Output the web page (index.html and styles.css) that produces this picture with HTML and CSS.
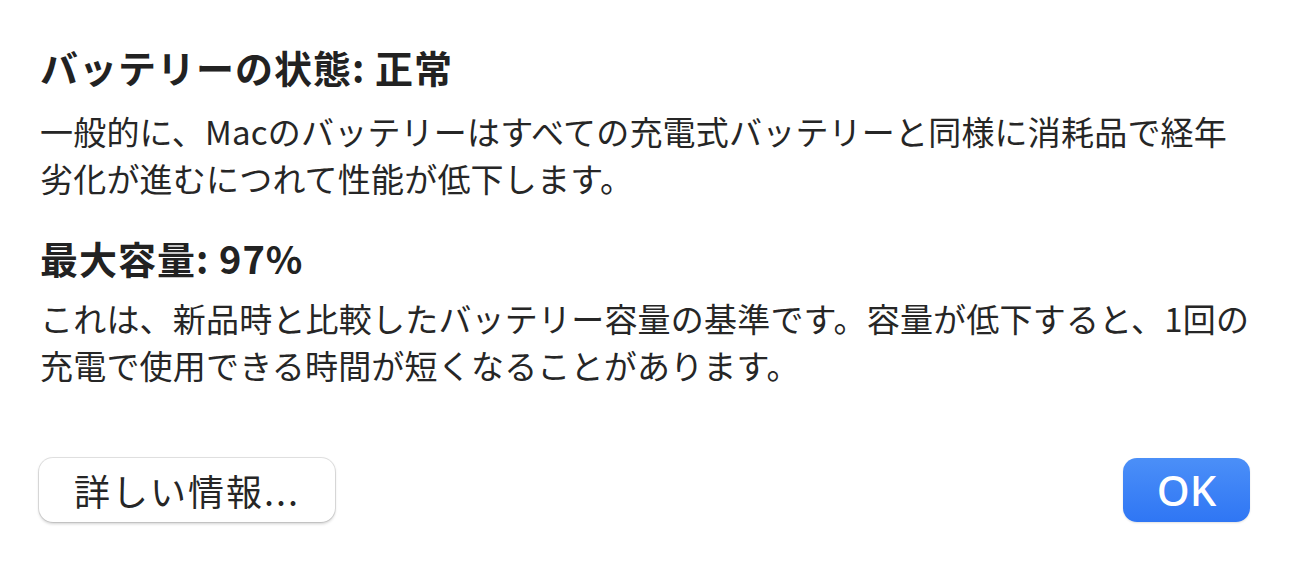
FILE: index.html
```html
<!DOCTYPE html>
<html lang="ja">
<head>
<meta charset="utf-8">
<link rel="stylesheet" href="styles.css">
</head>
<body>
<div class="dialog">
  <h1 class="title">バッテリーの状態: 正常</h1>
  <p class="text first">一般的に、Macのバッテリーはすべての充電式バッテリーと同様に消耗品で経年<br>劣化が進むにつれて性能が低下します。</p>
  <h2 class="title second">最大容量: 97%</h2>
  <p class="text">これは、新品時と比較したバッテリー容量の基準です。容量が低下すると、1回の<br>充電で使用できる時間が短くなることがあります。</p>
  <div class="buttons">
    <button class="btn btn-plain">詳しい情報...</button>
    <button class="btn btn-primary">OK</button>
  </div>
</div>
</body>
</html>
```
FILE: styles.css
```css
html, body {
  margin: 0;
  padding: 0;
  background: #ffffff;
}
body {
  font-family: "Noto Sans CJK JP", "Noto Sans", sans-serif;
  color: #262626;
}
.dialog {
  width: 1299px;
  height: 575px;
  box-sizing: border-box;
  padding: 45px 49px 0 40px;
  display: flex;
  flex-direction: column;
}
.title {
  margin: 0;
  font-size: 38px;
  font-weight: 700;
  line-height: 44px;
  letter-spacing: 1px;
  color: #222222;
}
.second {
  margin-top: 34px;
}
.text {
  margin: 15px 0 0 0;
  font-size: 33px;
  line-height: 47px;
  font-weight: 400;
  letter-spacing: 0.2px;
  white-space: nowrap;
  color: #262626;
}
.text.first {
  margin-top: 19px;
}
.buttons {
  margin-top: 69px;
  display: flex;
  justify-content: space-between;
  align-items: center;
}
.btn {
  height: 64px;
  border-radius: 14px;
  font-family: "Noto Sans CJK JP", "Noto Sans", sans-serif;
  border: none;
  padding: 0;
  line-height: 64px;
}
.btn-plain {
  width: 296px;
  background: #ffffff;
  color: #262626;
  font-size: 36px;
  letter-spacing: 2px;
  box-shadow: 0 0 0 1px rgba(0,0,0,0.10), 0 1.5px 3px rgba(0,0,0,0.18);
  margin-left: -1px;
}
.btn-primary {
  width: 127px;
  color: #ffffff;
  background: linear-gradient(#4b8ff8, #2f76f4);
  font-family: "Noto Sans", sans-serif;
  font-size: 42px;
  font-weight: 500;
  box-shadow: 0 1px 2px rgba(0,0,0,0.12);
}
```
